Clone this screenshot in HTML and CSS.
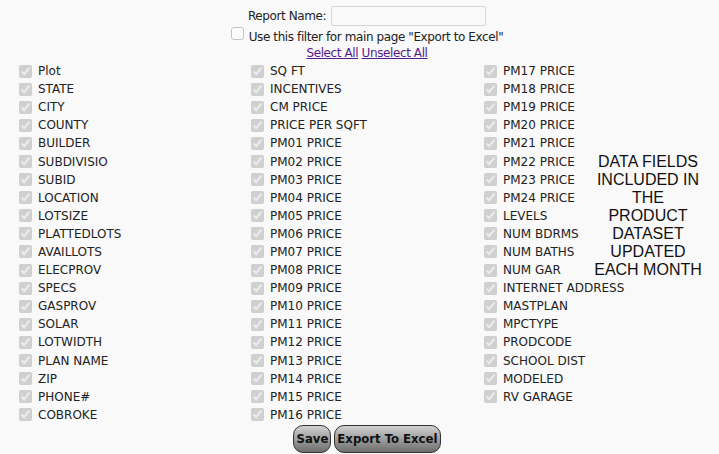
FILE: index.html
```html
<!DOCTYPE html>
<html>
<head>
<meta charset="utf-8">
<link rel="stylesheet" href="styles.css">
</head>
<body>
<div class="page">
  <div class="head">
    <div class="name-row"><label class="lbl">Report Name:</label><input class="name-input" type="text"></div>
    <div class="filter-row"><input type="checkbox" class="cb-plain"><span>Use this filter for main page "Export to Excel"</span></div>
    <div class="links"><a href="#" class="lnk">Select All</a> <a href="#" class="lnk">Unselect All</a></div>
  </div>
  <div class="fields">
    <div class="col">
      <label class="item"><input type="checkbox" checked disabled><span>Plot</span></label>
      <label class="item"><input type="checkbox" checked disabled><span>STATE</span></label>
      <label class="item"><input type="checkbox" checked disabled><span>CITY</span></label>
      <label class="item"><input type="checkbox" checked disabled><span>COUNTY</span></label>
      <label class="item"><input type="checkbox" checked disabled><span>BUILDER</span></label>
      <label class="item"><input type="checkbox" checked disabled><span>SUBDIVISIO</span></label>
      <label class="item"><input type="checkbox" checked disabled><span>SUBID</span></label>
      <label class="item"><input type="checkbox" checked disabled><span>LOCATION</span></label>
      <label class="item"><input type="checkbox" checked disabled><span>LOTSIZE</span></label>
      <label class="item"><input type="checkbox" checked disabled><span>PLATTEDLOTS</span></label>
      <label class="item"><input type="checkbox" checked disabled><span>AVAILLOTS</span></label>
      <label class="item"><input type="checkbox" checked disabled><span>ELECPROV</span></label>
      <label class="item"><input type="checkbox" checked disabled><span>SPECS</span></label>
      <label class="item"><input type="checkbox" checked disabled><span>GASPROV</span></label>
      <label class="item"><input type="checkbox" checked disabled><span>SOLAR</span></label>
      <label class="item"><input type="checkbox" checked disabled><span>LOTWIDTH</span></label>
      <label class="item"><input type="checkbox" checked disabled><span>PLAN NAME</span></label>
      <label class="item"><input type="checkbox" checked disabled><span>ZIP</span></label>
      <label class="item"><input type="checkbox" checked disabled><span>PHONE#</span></label>
      <label class="item"><input type="checkbox" checked disabled><span>COBROKE</span></label>
    </div>
    <div class="col">
      <label class="item"><input type="checkbox" checked disabled><span>SQ FT</span></label>
      <label class="item"><input type="checkbox" checked disabled><span>INCENTIVES</span></label>
      <label class="item"><input type="checkbox" checked disabled><span>CM PRICE</span></label>
      <label class="item"><input type="checkbox" checked disabled><span>PRICE PER SQFT</span></label>
      <label class="item"><input type="checkbox" checked disabled><span>PM01 PRICE</span></label>
      <label class="item"><input type="checkbox" checked disabled><span>PM02 PRICE</span></label>
      <label class="item"><input type="checkbox" checked disabled><span>PM03 PRICE</span></label>
      <label class="item"><input type="checkbox" checked disabled><span>PM04 PRICE</span></label>
      <label class="item"><input type="checkbox" checked disabled><span>PM05 PRICE</span></label>
      <label class="item"><input type="checkbox" checked disabled><span>PM06 PRICE</span></label>
      <label class="item"><input type="checkbox" checked disabled><span>PM07 PRICE</span></label>
      <label class="item"><input type="checkbox" checked disabled><span>PM08 PRICE</span></label>
      <label class="item"><input type="checkbox" checked disabled><span>PM09 PRICE</span></label>
      <label class="item"><input type="checkbox" checked disabled><span>PM10 PRICE</span></label>
      <label class="item"><input type="checkbox" checked disabled><span>PM11 PRICE</span></label>
      <label class="item"><input type="checkbox" checked disabled><span>PM12 PRICE</span></label>
      <label class="item"><input type="checkbox" checked disabled><span>PM13 PRICE</span></label>
      <label class="item"><input type="checkbox" checked disabled><span>PM14 PRICE</span></label>
      <label class="item"><input type="checkbox" checked disabled><span>PM15 PRICE</span></label>
      <label class="item"><input type="checkbox" checked disabled><span>PM16 PRICE</span></label>
    </div>
    <div class="col">
      <label class="item"><input type="checkbox" checked disabled><span>PM17 PRICE</span></label>
      <label class="item"><input type="checkbox" checked disabled><span>PM18 PRICE</span></label>
      <label class="item"><input type="checkbox" checked disabled><span>PM19 PRICE</span></label>
      <label class="item"><input type="checkbox" checked disabled><span>PM20 PRICE</span></label>
      <label class="item"><input type="checkbox" checked disabled><span>PM21 PRICE</span></label>
      <label class="item"><input type="checkbox" checked disabled><span>PM22 PRICE</span></label>
      <label class="item"><input type="checkbox" checked disabled><span>PM23 PRICE</span></label>
      <label class="item"><input type="checkbox" checked disabled><span>PM24 PRICE</span></label>
      <label class="item"><input type="checkbox" checked disabled><span>LEVELS</span></label>
      <label class="item"><input type="checkbox" checked disabled><span>NUM BDRMS</span></label>
      <label class="item"><input type="checkbox" checked disabled><span>NUM BATHS</span></label>
      <label class="item"><input type="checkbox" checked disabled><span>NUM GAR</span></label>
      <label class="item"><input type="checkbox" checked disabled><span>INTERNET ADDRESS</span></label>
      <label class="item"><input type="checkbox" checked disabled><span>MASTPLAN</span></label>
      <label class="item"><input type="checkbox" checked disabled><span>MPCTYPE</span></label>
      <label class="item"><input type="checkbox" checked disabled><span>PRODCODE</span></label>
      <label class="item"><input type="checkbox" checked disabled><span>SCHOOL DIST</span></label>
      <label class="item"><input type="checkbox" checked disabled><span>MODELED</span></label>
      <label class="item"><input type="checkbox" checked disabled><span>RV GARAGE</span></label>
    </div>
    <div class="note">DATA FIELDS INCLUDED IN THE PRODUCT DATASET UPDATED EACH MONTH</div>
  </div>
  <div class="actions">
    <button class="btn">Save</button><button class="btn">Export To Excel</button>
  </div>
</div>
</body>
</html>
```
FILE: styles.css
```css
html, body {
  margin: 0;
  padding: 0;
  background: #f9f9f9;
}
body {
  font-family: "DejaVu Sans", sans-serif;
  font-size: 12px;
  color: #222;
}
.page {
  padding-left: 15px;
}
.head {
  display: flex;
  flex-direction: column;
  align-items: center;
  padding-top: 6px;
  letter-spacing: -0.4px;
}
.name-row {
  display: flex;
  align-items: center;
  height: 20px;
}
.lbl {
  margin-right: 5px;
}
.name-input {
  width: 155px;
  height: 20px;
  box-sizing: border-box;
  border: 1px solid #d6d6d6;
  border-radius: 2px;
  background: #f9f9f9;
  margin: 0;
  padding: 0;
}
.filter-row {
  display: flex;
  align-items: center;
  height: 17px;
  margin-top: 2px;
}
.cb-plain {
  appearance: none;
  -webkit-appearance: none;
  box-sizing: border-box;
  margin: 0 5px 0 0;
  width: 13px;
  height: 13px;
  border: 1px solid #c4c4c4;
  border-radius: 3px;
  background: #fdfdfd;
  position: relative;
  top: -3px;
}
.links {
  height: 16px;
  line-height: 16px;
}
.lnk {
  color: #551a8b;
}
.fields {
  display: grid;
  grid-template-columns: 232px 233px 114px 108px;
  margin-top: 1px;
}
.col {
  display: flex;
  flex-direction: column;
}
.item {
  display: flex;
  align-items: center;
  height: 18.1px;
  white-space: nowrap;
}
.item input {
  width: 13px;
  height: 13px;
  margin: 0 6px 0 4px;
}
.note {
  font-family: "Liberation Sans", Arial, sans-serif;
  font-size: 16px;
  line-height: 18px;
  text-align: center;
  color: #111;
  padding-top: 91px;
}
.actions {
  display: flex;
  justify-content: center;
  gap: 3px;
  margin-top: 1px;
}
.btn {
  font-family: "DejaVu Sans Condensed", "DejaVu Sans", sans-serif;
  font-weight: bold;
  font-size: 13px;
  color: #111;
  height: 28px;
  padding: 0 2px;
  border: 1px solid #333;
  border-radius: 10px;
  background: linear-gradient(#d0d0d0, #9a9a9a 55%, #6e6e6e);
}
```
